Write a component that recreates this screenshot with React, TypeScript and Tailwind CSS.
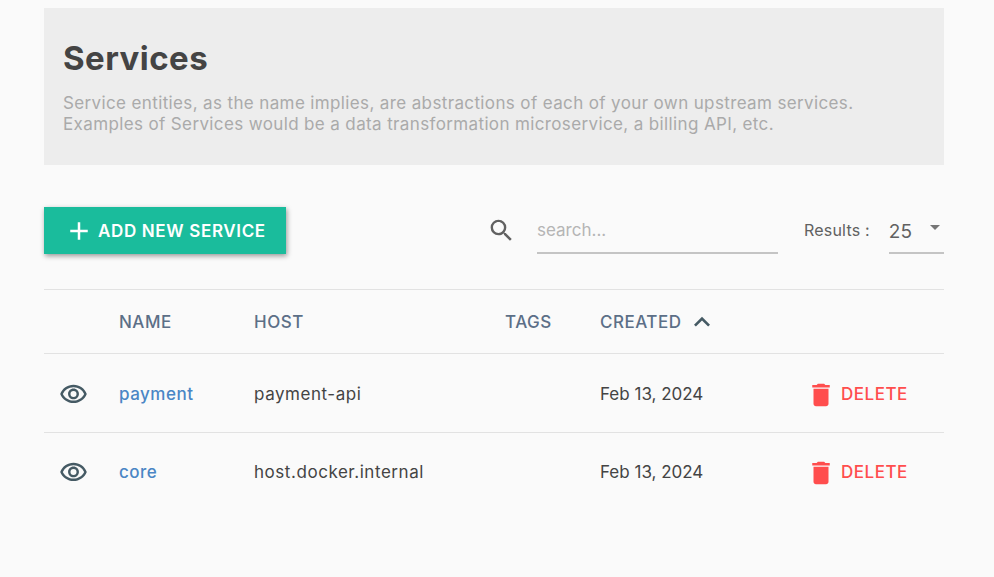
import { MdAdd, MdDelete, MdKeyboardArrowUp, MdOutlineVisibility, MdSearch } from "react-icons/md"

const services = [
  { name: "payment", host: "payment-api", created: "Feb 13, 2024" },
  { name: "core", host: "host.docker.internal", created: "Feb 13, 2024" },
]

const cols = "grid grid-cols-[75px_135px_251px_95px_209px_135px] items-center"

export default function App() {
  return (
    <div className="min-h-[577px] bg-[#fafafa] px-[44px] pt-2 font-['Inter',sans-serif]">
      <div className="h-[157px] w-[900px] bg-[#ededed] px-[19px] pt-[29px]">
        <h1 className="text-[33px] leading-[42px] font-bold tracking-[0.45px] text-[#444444]">Services</h1>
        <p className="mt-[14px] text-[17px] leading-[21px] tracking-[0.37px] text-[#aaaaaa]">
          Service entities, as the name implies, are abstractions of each of your own upstream services.
          <br />
          Examples of Services would be a data transformation microservice, a billing API, etc.
        </p>
      </div>

      <div className="mt-[42px] flex h-[47px] w-[900px] items-center">
        <button className="flex h-[47px] w-[242px] items-center bg-[#1abc9c] pl-[20px] text-[17px] font-semibold tracking-[0.65px] text-white shadow-[1px_2px_5px_rgba(0,0,0,0.4)]">
          <MdAdd className="mr-[4px] h-[30px] w-[30px]" />
          <span className="pt-[2px]">ADD NEW SERVICE</span>
        </button>
        <MdSearch className="ml-[201px] h-[29px] w-[29px] text-[#616161]" />
        <div className="ml-[21px] flex h-[47px] w-[241px] items-center border-b-2 border-[#c4c4c4] pt-[3px] text-[17px] text-[#b5b5b5]">
          search...
        </div>
        <span className="ml-[26px] pb-[2px] text-[16px] tracking-[0.2px] text-[#616161]">Results :</span>
        <div className="relative ml-[19px] flex h-[47px] w-[55px] items-center border-b-2 border-[#c4c4c4] pt-[5px] text-[19px] text-[#616161]">
          25
          <span className="absolute top-[18px] right-[4px] h-0 w-0 border-x-[5px] border-t-[5px] border-x-transparent border-t-[#757575]" />
        </div>
      </div>

      <div className="mt-[35px] w-[900px] border-t border-[#e2e2e2]">
        <div className={`${cols} h-[64px] border-b border-[#e2e2e2] text-[17px] font-medium tracking-[0.5px] text-[#5c6f87]`}>
          <span />
          <span className="pt-[3px]">NAME</span>
          <span className="pt-[3px]">HOST</span>
          <span className="pt-[3px]">TAGS</span>
          <span className="flex items-center">
            <span className="pt-[3px]">CREATED</span>
            <MdKeyboardArrowUp className="ml-[5px] h-[32px] w-[32px] text-[#455a64]" />
          </span>
          <span />
        </div>
        {services.map((service, index) => (
          <div
            key={service.name}
            className={`${cols} h-[79px] text-[17px] text-[#444444] ${index === 0 ? "border-b border-[#e2e2e2] pt-[3px]" : ""}`}
          >
            <MdOutlineVisibility className="ml-[15px] h-[29px] w-[29px] text-[#455a64]" />
            <a className="font-medium tracking-[0.5px] text-[#4a86c5]">{service.name}</a>
            <span className="tracking-[0.55px]">{service.host}</span>
            <span />
            <span>{service.created}</span>
            <span className="flex items-center font-medium tracking-[0.5px] text-[#ff4d4d]">
              <MdDelete className="mr-[5px] -ml-[3px] h-[30px] w-[30px]" />
              DELETE
            </span>
          </div>
        ))}
      </div>
    </div>
  )
}
